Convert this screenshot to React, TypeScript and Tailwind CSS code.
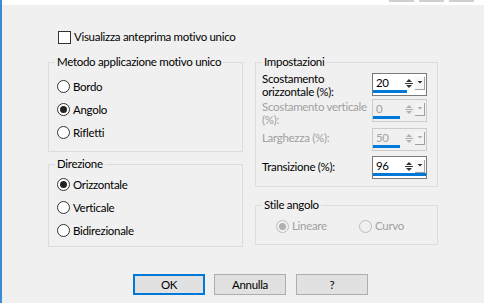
import React from 'react';

// Finestra di dialogo "Motivo unico" - stile Windows classico

const font = { fontFamily: 'Lato, "Liberation Sans", sans-serif' };

const Radio = ({ label, checked, disabled }: { label: string; checked?: boolean; disabled?: boolean }) => (
  <div className="flex items-center gap-[3px]">
    <span
      className={`w-[13px] h-[13px] rounded-full border flex items-center justify-center flex-shrink-0 ${
        disabled ? 'border-[#bcbcbc] bg-[#f0f0f0]' : 'border-[#333333] bg-white'
      }`}
    >
      {checked && (
        <span className={`w-[7px] h-[7px] rounded-full ${disabled ? 'bg-[#b0b0b0]' : 'bg-[#222222]'}`} />
      )}
    </span>
    <span className={disabled ? 'text-[#a0a0a0]' : 'text-black'}>{label}</span>
  </div>
);

const SpinIcons = ({ disabled }: { disabled?: boolean }) => {
  const c = disabled ? '#b0b0b0' : '#333333';
  return (
    <div className="flex items-start gap-[1px] pt-[3px] pr-[1px]">
      <svg width="10" height="12" viewBox="0 0 10 12">
        <path d="M2 5 L5 2 L8 5 Z" fill={c} />
        <line x1="1" y1="6.5" x2="9" y2="6.5" stroke={c} strokeWidth="1" />
        <path d="M2 8 L8 8 L5 11 Z" fill={c} />
      </svg>
      <svg width="10" height="13" viewBox="0 0 10 13">
        <rect x="0" y="0" width="10" height="13" fill={disabled ? '#f4f4f4' : '#f7f7f7'} />
        <line x1="9.5" y1="0" x2="9.5" y2="13" stroke="#a0a0a0" />
        <line x1="0" y1="12.5" x2="10" y2="12.5" stroke="#a0a0a0" />
        <path d="M2.5 4 L7.5 4 L5 6.5 Z" fill={c} />
      </svg>
    </div>
  );
};

const Spinner = ({ value, bar, disabled }: { value: string; bar: number; disabled?: boolean }) => (
  <div
    className={`w-[55px] h-[23px] border flex flex-col ${
      disabled ? 'border-[#cccccc] bg-[#f0f0f0]' : 'border-[#7a7a7a] bg-white'
    }`}
  >
    <div className="flex flex-1 items-start justify-between">
      <span className={`pl-[3px] pt-[2px] leading-[14px] ${disabled ? 'text-[#a0a0a0]' : 'text-black'}`}>{value}</span>
      <SpinIcons disabled={disabled} />
    </div>
    <div className="h-[3px] bg-[#0078d7] mb-[2px]" style={{ width: bar }} />
  </div>
);

const Legend = ({ children }: { children: React.ReactNode }) => (
  <legend className="ml-[6px] px-[2px] leading-[16px] text-black whitespace-nowrap">{children}</legend>
);

const Button = ({ label, primary }: { label: string; primary?: boolean }) => (
  <button
    className={`w-[72px] h-[21px] bg-[#e1e1e1] flex items-center justify-center text-black ${
      primary ? 'border-2 border-[#0078d7]' : 'border border-[#adadad]'
    }`}
  >
    {label}
  </button>
);

export default function App() {
  return (
    <div
      className="w-[484px] h-[303px] bg-[#f0f0f0] border-l-2 border-[#3c8bd0] flex flex-col overflow-hidden text-[11.5px] leading-[16px] tracking-[-0.3px]"
      style={font}
    >
      {/* striscia superiore con i pulsanti della finestra */}
      <div className="h-[5px] bg-white flex justify-end gap-[5px] pr-[10px]">
        <div className="w-[25px] h-[2px] bg-[#cfcfcf]" />
        <div className="w-[25px] h-[2px] bg-[#cfcfcf]" />
        <div className="w-[25px] h-[2px] bg-[#cfcfcf]" />
      </div>

      {/* anteprima */}
      <div className="mt-[24px] pl-[56px] flex items-center gap-[3px] h-[16px]">
        <span className="w-[13px] h-[13px] border border-[#333333] bg-white" />
        <span>Visualizza anteprima motivo unico</span>
      </div>

      <div className="mt-[9px] flex pl-[46px] gap-[12px]">
        {/* colonna sinistra */}
        <div className="w-[195px] flex flex-col">
          <fieldset className="border border-[#dcdcdc]">
            <Legend>Metodo applicazione motivo unico</Legend>
            <div className="pl-[8px] pt-[5px] pb-[7px]">
              <div className="h-[23px] flex items-center"><Radio label="Bordo" /></div>
              <div className="h-[23px] flex items-center"><Radio label="Angolo" checked /></div>
              <div className="h-[23px] flex items-center"><Radio label="Rifletti" /></div>
            </div>
          </fieldset>

          <fieldset className="mt-[4px] border border-[#dcdcdc]">
            <Legend>Direzione</Legend>
            <div className="pl-[8px] pt-[1px] pb-[4px]">
              <div className="h-[23px] flex items-center"><Radio label="Orizzontale" checked /></div>
              <div className="h-[23px] flex items-center"><Radio label="Verticale" /></div>
              <div className="h-[23px] flex items-center"><Radio label="Bidirezionale" /></div>
            </div>
          </fieldset>
        </div>

        {/* colonna destra */}
        <div className="w-[183px] flex flex-col">
          <fieldset className="border border-[#dcdcdc]">
            <Legend>Impostazioni</Legend>
            <div className="pl-[6px] pt-[2px] pb-[4px]">
              <div className="h-[26px] flex">
                <div className="w-[110px] leading-[13px] whitespace-nowrap">Scostamento<br />orizzontale (%):</div>
                <div className="mt-[1px]"><Spinner value="20" bar={34} /></div>
              </div>
              <div className="h-[28px] flex">
                <div className="w-[110px] pt-[2px] leading-[13px] whitespace-nowrap text-[#a0a0a0]">Scostamento verticale<br />(%):</div>
                <div className="mt-[1px]"><Spinner value="0" bar={27} disabled /></div>
              </div>
              <div className="h-[28px] flex">
                <div className="w-[110px] pt-[5px] leading-[13px] whitespace-nowrap text-[#a0a0a0]">Larghezza (%):</div>
                <div className="mt-[2px]"><Spinner value="50" bar={27} disabled /></div>
              </div>
              <div className="h-[28px] flex">
                <div className="w-[110px] pt-[6px] leading-[13px] whitespace-nowrap">Transizione (%):</div>
                <div className="mt-[2px]"><Spinner value="96" bar={53} /></div>
              </div>
            </div>
          </fieldset>

          <fieldset className="mt-[10px] border border-[#dcdcdc]">
            <Legend>Stile angolo</Legend>
            <div className="pl-[20px] pb-[5px] h-[31px] flex items-center">
              <div className="w-[83px]"><Radio label="Lineare" checked disabled /></div>
              <Radio label="Curvo" disabled />
            </div>
          </fieldset>
        </div>
      </div>

      {/* pulsanti */}
      <div className="mt-auto mb-[8px] pl-[131px] flex gap-[9px]">
        <Button label="OK" primary />
        <Button label="Annulla" />
        <div className="ml-[1px]"><Button label="?" /></div>
      </div>
    </div>
  );
}
